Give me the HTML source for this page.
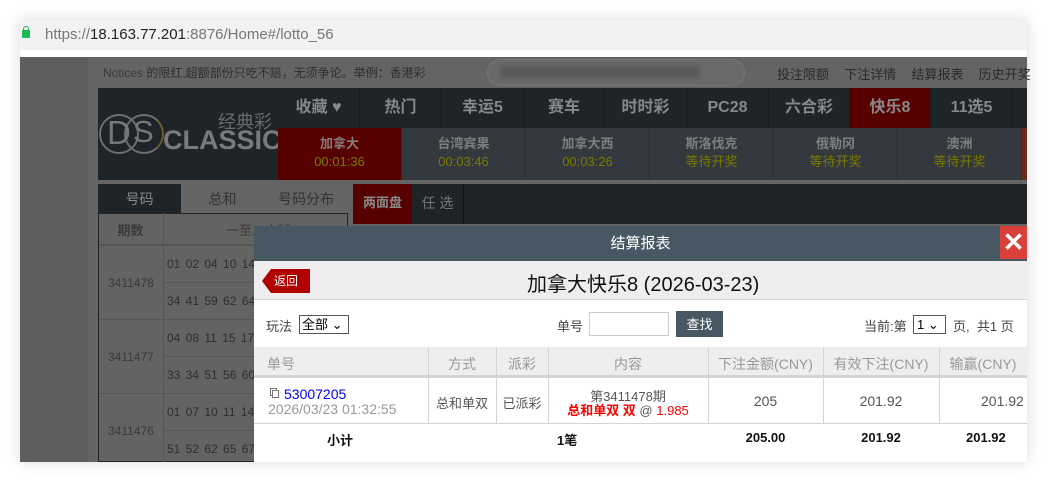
<!DOCTYPE html>
<html><head><meta charset="utf-8">
<style>
*{margin:0;padding:0;box-sizing:border-box}
body{width:1047px;height:482px;background:#fff;position:relative;overflow:hidden;font-family:"Liberation Sans","Noto Sans CJK SC",sans-serif;font-size:13px}
.a{position:absolute}
.win{left:20px;top:20px;width:1007px;height:442px;background:#fff;box-shadow:0 0 14px rgba(0,0,0,.15)}
.c{text-align:center}
.nav div{position:absolute;top:0;height:40px;line-height:40px;text-align:center;color:#888;font-weight:bold;font-size:16px;border-right:1px solid #151a1d}
.sub div{position:absolute;top:0;height:52px;text-align:center;border-right:1px solid #2a2f33;font-size:13px;font-weight:bold;color:#7e7e7e;padding-top:7px;line-height:18px}
.sub span{color:#7a7a00;font-weight:normal;display:block}
</style></head><body>
<div class="a win"></div>
<div class="a" style="left:20px;top:20px;width:1007px;height:30px;background:#f2f2f2"></div>
<div class="a" style="left:22px;top:30px;width:8px;height:8px;background:#1db954;border-radius:1px"></div>
<div class="a" style="left:23px;top:26px;width:6px;height:6px;border:1.5px solid #1db954;border-bottom:none;border-radius:3px 3px 0 0"></div>
<div class="a" style="left:45px;top:26px;font-size:15px;color:#777">https://<span style="color:#222">18.163.77.201</span>:8876/Home#/lotto_56</div>
<div class="a" style="left:20px;top:57px;width:1007px;height:405px;background:#5e5e5e"></div>
<div class="a" style="left:88px;top:57px;width:939px;height:405px;background:#646464"></div>
<div class="a" style="left:103px;top:64px;font-size:12px;color:#2e2e2e"><span style="color:#3a3a3a">Notices</span> 的限红,超额部份只吃不赔，无须争论。举例：香港彩</div>
<div class="a" style="left:487px;top:59px;width:258px;height:27px;border:1px solid #777;border-radius:14px;background:#6a6a6a"></div>
<div class="a" style="left:500px;top:66px;width:200px;height:12px;background:#5a5a5a;filter:blur(2px)"></div>
<div class="a" style="left:777px;top:64px;font-size:13px;color:#2a2a2a;word-spacing:4px">投注限额&nbsp; 下注详情&nbsp; 结算报表&nbsp; 历史开奖</div>
<div class="a" style="left:98px;top:88px;width:929px;height:92px;background:#1e2428"></div>
<div class="a" style="left:99px;top:114px;width:40px;height:40px;border:2px solid #6e6e6e;border-radius:50%"></div>
<div class="a" style="left:124px;top:114px;width:40px;height:40px;border:2px solid #6e6e6e;border-right-color:#6e5a30;border-radius:50%"></div>
<div class="a" style="left:107px;top:114px;font-size:33px;color:#777">D</div>
<div class="a" style="left:133px;top:114px;font-size:31px;color:#777">S</div>
<div class="a" style="left:163px;top:125px;font-size:27px;font-weight:bold;color:#7a7a7a">CLASSIC</div>
<div class="a" style="left:218px;top:108px;font-size:18px;color:#6a6a6a">经典彩</div>
<div class="a nav" style="left:278px;top:88px;width:749px;height:40px">
<div style="left:0;width:82px">收藏 ♥</div><div style="left:82px;width:82px">热门</div><div style="left:164px;width:82px">幸运5</div><div style="left:246px;width:81px">赛车</div><div style="left:327px;width:82px">时时彩</div><div style="left:409px;width:82px">PC28</div><div style="left:491px;width:81px">六合彩</div><div style="left:572px;width:81px;background:#560000">快乐8</div><div style="left:653px;width:82px">11选5</div></div>
<div class="a sub" style="left:278px;top:128px;width:749px;height:52px;background:#33393e">
<div style="left:0;width:124px;background:#560000;color:#8a7a7a">加拿大<span>00:01:36</span></div><div style="left:124px;width:124px">台湾宾果<span>00:03:46</span></div><div style="left:248px;width:124px">加拿大西<span>00:03:26</span></div><div style="left:372px;width:124px">斯洛伐克<span>等待开奖</span></div><div style="left:496px;width:124px">俄勒冈<span>等待开奖</span></div><div style="left:620px;width:124px">澳洲<span>等待开奖</span></div><div style="left:744px;width:5px;background:#6a2a1a;border:none"></div></div>
<div class="a c" style="left:98px;top:184px;width:83px;height:30px;line-height:30px;background:#1e2428;color:#888;font-size:14px">号码</div>
<div class="a c" style="left:181px;top:184px;width:83px;line-height:30px;color:#333;font-size:14px">总和</div>
<div class="a c" style="left:264px;top:184px;width:84px;line-height:30px;color:#333;font-size:14px">号码分布</div>
<div class="a" style="left:98px;top:213px;width:250px;height:249px;border:1px solid #222;background:#636363"></div>
<div class="a" style="left:163px;top:213px;width:1px;height:249px;background:#555"></div>
<div class="a c" style="left:98px;top:220px;width:65px;color:#3a3a3a;font-weight:bold">期数</div>
<div class="a" style="left:226px;top:220px;color:#3a3a3a">一至二十球</div>
<div class="a" style="left:99px;top:244px;width:248px;height:2px;background:#555"></div>
<div class="a" style="left:164px;top:282px;width:90px;height:1px;background:#555"></div>
<div class="a" style="left:99px;top:319px;width:155px;height:1px;background:#555"></div>
<div class="a" style="left:164px;top:356px;width:90px;height:1px;background:#555"></div>
<div class="a" style="left:99px;top:393px;width:155px;height:1px;background:#555"></div>
<div class="a" style="left:164px;top:430px;width:90px;height:1px;background:#555"></div>
<div class="a" style="left:108px;top:276px;color:#3a3a3a;font-size:12px">3411478</div>
<div class="a" style="left:108px;top:350px;color:#3a3a3a;font-size:12px">3411477</div>
<div class="a" style="left:108px;top:424px;color:#3a3a3a;font-size:12px">3411476</div>
<div class="a" style="left:167px;top:246px;color:#2e2e2e;font-size:12px;word-spacing:2px;line-height:37px">01 02 04 10 14<br>34 41 59 62 64<br>04 08 11 15 17<br>33 34 51 56 60<br>01 07 10 11 14<br>51 52 62 65 67</div>
<div class="a" style="left:353px;top:184px;width:674px;height:40px;background:#1e2428"></div>
<div class="a c" style="left:353px;top:184px;width:59px;height:40px;line-height:38px;background:#560000;color:#888;font-weight:bold">两面盘</div>
<div class="a c" style="left:412px;top:184px;width:52px;line-height:38px;color:#777;font-size:14px;border-right:1px solid #111;height:40px">任 选</div>
<div class="a" style="left:254px;top:226px;width:773px;height:236px;background:#fff"></div>
<div class="a c" style="left:254px;top:226px;width:773px;height:35px;line-height:35px;background:#475863;color:#fff;font-size:15px">结算报表</div>
<div class="a c" style="left:1000px;top:226px;width:27px;height:33px;background:#d9403a;color:#fff;font-size:26px;font-weight:bold;line-height:33px">✕</div>
<div class="a" style="left:254px;top:261px;width:773px;height:39px;background:#eee;border-bottom:1px solid #d4d4d4"></div>
<div class="a" style="left:262px;top:269px;width:0;height:0;border-top:12px solid transparent;border-bottom:12px solid transparent;border-right:9px solid #b00000"></div>
<div class="a" style="left:271px;top:269px;width:39px;height:24px;background:#b00000;color:#fff;font-size:12px;line-height:24px;padding-left:3px">返回</div>
<div class="a" style="left:527px;top:268px;font-size:20px;color:#111">加拿大快乐8 (2026-03-23)</div>
<div class="a" style="left:266px;top:316px;color:#444">玩法</div>
<div class="a" style="left:299px;top:315px;width:50px;height:19px;border:1px solid #555;font-size:13px;padding-left:2px;line-height:17px;color:#000">全部 ⌄</div>
<div class="a" style="left:557px;top:316px;color:#444">单号</div>
<div class="a" style="left:589px;top:312px;width:80px;height:24px;border:1px solid #ccc"></div>
<div class="a c" style="left:676px;top:311px;width:47px;height:26px;line-height:28px;background:#475863;color:#fff">查找</div>
<div class="a" style="left:864px;top:316px;color:#444">当前:第</div>
<div class="a" style="left:913px;top:315px;width:33px;height:19px;border:1px solid #555;padding-left:3px;line-height:17px;color:#000">1 ⌄</div>
<div class="a" style="left:953px;top:316px;color:#444">页,&nbsp; 共1 页</div>
<div class="a" style="left:254px;top:347px;width:773px;height:31px;background:#eee;border-bottom:3px solid #d4d4d4"></div>
<div class="a" style="left:254px;top:423px;width:773px;height:1px;background:#d4d4d4"></div>
<div class="a" style="left:428px;top:347px;width:1px;height:76px;background:#d4d4d4"></div>
<div class="a" style="left:496px;top:347px;width:1px;height:76px;background:#d4d4d4"></div>
<div class="a" style="left:548px;top:347px;width:1px;height:76px;background:#d4d4d4"></div>
<div class="a" style="left:708px;top:347px;width:1px;height:76px;background:#d4d4d4"></div>
<div class="a" style="left:823px;top:347px;width:1px;height:76px;background:#d4d4d4"></div>
<div class="a" style="left:939px;top:347px;width:1px;height:76px;background:#d4d4d4"></div>
<div class="a" style="left:267px;top:354px;color:#999;font-size:14px">单号</div>
<div class="a c" style="left:428px;top:354px;width:68px;color:#999;font-size:14px">方式</div>
<div class="a c" style="left:496px;top:354px;width:52px;color:#999;font-size:14px">派彩</div>
<div class="a c" style="left:548px;top:354px;width:160px;color:#999;font-size:14px">内容</div>
<div class="a c" style="left:708px;top:354px;width:115px;color:#999;font-size:14px">下注金额(CNY)</div>
<div class="a c" style="left:823px;top:354px;width:116px;color:#999;font-size:14px">有效下注(CNY)</div>
<div class="a c" style="left:939px;top:354px;width:88px;color:#999;font-size:14px">输赢(CNY)</div>
<div class="a" style="left:270px;top:388px;width:7px;height:8px;border:1px solid #777"></div>
<div class="a" style="left:272px;top:390px;width:7px;height:8px;border:1px solid #777;background:#fff"></div>
<div class="a" style="left:284px;top:386px;color:#0000ee;font-size:14px">53007205</div>
<div class="a" style="left:268px;top:401px;color:#999;font-size:14px">2026/03/23 01:32:55</div>
<div class="a c" style="left:428px;top:393px;width:68px;color:#555;font-size:13px">总和单双</div>
<div class="a c" style="left:496px;top:393px;width:52px;color:#555;font-size:13px">已派彩</div>
<div class="a c" style="left:548px;top:386px;width:160px;color:#555;font-size:13px">第3411478期</div>
<div class="a c" style="left:548px;top:400px;width:160px;color:#f00;font-size:13px;font-weight:bold">总和单双 双 <span style="color:#555;font-weight:normal">@</span> <span style="font-weight:normal">1.985</span></div>
<div class="a c" style="left:708px;top:393px;width:115px;color:#555;font-size:14px">205</div>
<div class="a c" style="left:823px;top:393px;width:116px;color:#555;font-size:14px">201.92</div>
<div class="a" style="left:981px;top:393px;color:#555;font-size:14px">201.92</div>
<div class="a" style="left:327px;top:430px;font-weight:bold;color:#111">小计</div>
<div class="a" style="left:557px;top:430px;font-weight:bold;color:#111">1笔</div>
<div class="a c" style="left:708px;top:430px;width:115px;font-weight:bold;color:#111">205.00</div>
<div class="a c" style="left:823px;top:430px;width:116px;font-weight:bold;color:#111">201.92</div>
<div class="a" style="left:966px;top:430px;font-weight:bold;color:#111">201.92</div>
</body></html>
